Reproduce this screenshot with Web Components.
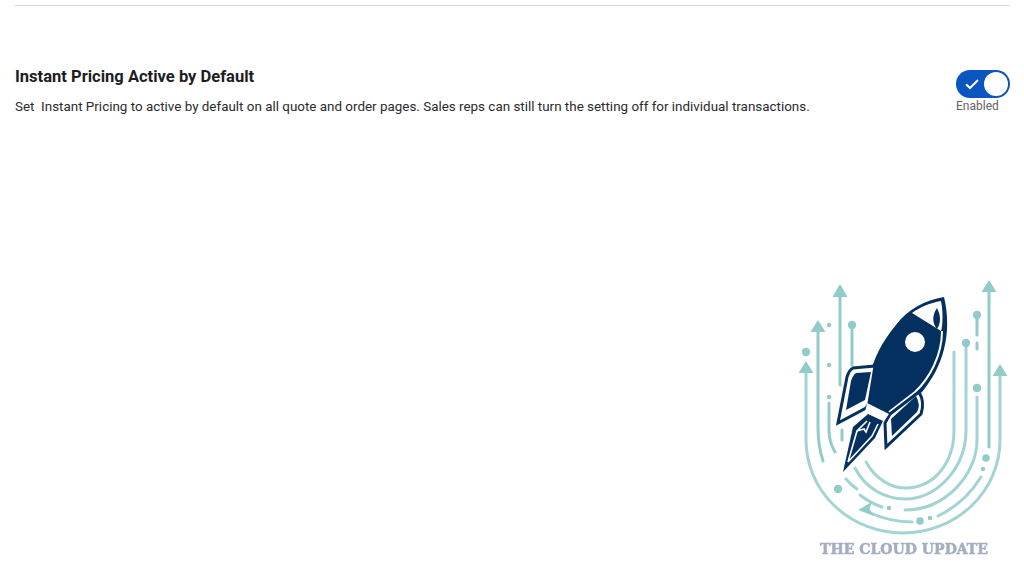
<!DOCTYPE html>
<html>
<head>
<meta charset="utf-8">
<title>Instant Pricing</title>
<style>
  html, body { margin: 0; padding: 0; background: #fff; }
  body { width: 1024px; height: 572px; overflow: hidden; font-family: Roboto, "Liberation Sans", sans-serif; }
</style>
</head>
<body>
<settings-page>
  <setting-row label="Instant Pricing Active by Default">
    Set&nbsp; Instant Pricing to active by default on all quote and order pages. Sales reps can still turn the setting off for individual transactions.
    <toggle-switch slot="control" label="Enabled"></toggle-switch>
  </setting-row>
</settings-page>
<cloud-logo>THE CLOUD UPDATE</cloud-logo>

<script>
class SettingsPage extends HTMLElement {
  constructor() {
    super();
    this.attachShadow({ mode: "open" }).innerHTML = `
      <style>
        :host { display: block; padding: 5px 14px 0 15px; }
        .rule { height: 1px; background: #d6d6d6; }
        .content { padding-top: 61px; }
      </style>
      <div class="rule"></div>
      <div class="content"><slot></slot></div>`;
  }
}

class SettingRow extends HTMLElement {
  constructor() {
    super();
    this.attachShadow({ mode: "open" }).innerHTML = `
      <style>
        :host { display: flex; justify-content: space-between; align-items: flex-start; }
        .title { font-size: 16.55px; line-height: 20px; font-weight: 700; color: #1d1d1f; }
        .text { margin-top: 10px; font-size: 13.41px; line-height: 20px; color: #2b2b2e; }
        .control { padding-top: 3px; }
      </style>
      <div>
        <div class="title"></div>
        <div class="text"><slot></slot></div>
      </div>
      <div class="control"><slot name="control"></slot></div>`;
  }

  connectedCallback() {
    this.shadowRoot.querySelector(".title").textContent = this.getAttribute("label");
  }
}

class ToggleSwitch extends HTMLElement {
  constructor() {
    super();
    this.attachShadow({ mode: "open" }).innerHTML = `
      <style>
        :host { display: flex; flex-direction: column; width: 54px; }
        .track { display: flex; align-items: center; justify-content: space-between; box-sizing: border-box;
          width: 54px; height: 28px; padding: 0 2px 0 8px; border-radius: 14px; background: #0b55c0; }
        .knob { width: 24px; height: 24px; border-radius: 50%; background: #fff; }
        svg { display: block; }
        .label { margin-top: 1px; font-size: 12px; line-height: 14px; color: #636363; }
      </style>
      <div class="track">
        <svg width="16" height="12" viewBox="0 0 16 12"><path d="M2 6.2l4 3.8 8-8" fill="none" stroke="#fff" stroke-width="2"/></svg>
        <div class="knob"></div>
      </div>
      <div class="label"></div>`;
  }

  connectedCallback() {
    this.shadowRoot.querySelector(".label").textContent = this.getAttribute("label");
  }
}

class CloudLogo extends HTMLElement {
  constructor() {
    super();
    this.attachShadow({ mode: "open" }).innerHTML = `
      <style>
        :host { display: block; position: absolute; left: 780px; top: 270px; width: 244px; }
        svg { display: block; filter: blur(.3px); }
        .name { margin-top: -21px; padding-left: 4px; text-align: center; font: 700 15.6px/20px "DejaVu Serif Condensed", "DejaVu Serif", serif;
          color: #a3aec0; white-space: nowrap; -webkit-text-stroke: .5px #a3aec0; filter: blur(.4px); }
      </style>
      <svg width="244" height="290" viewBox="780 270 244 290">
        <g fill="none" stroke="#91cbca" stroke-width="3" stroke-linecap="round">
          <path d="M840 295V385"/>
          <path d="M818 330V428Q818 445 823 461"/>
          <path d="M806 371V440A97 93 0 0 0 1000 440V374" stroke="#a2d4d3"/>
          <path d="M989 290V447"/>
          <path d="M829 403V430Q829 442 835 452"/>
          <path d="M852 330V365"/>
          <path d="M842 430V440"/>
          <path d="M977 318V335M977 343V349"/>
          <path d="M966 347V430C966 470 935 499 905 499C885 499 865 488 855 468" stroke="#a2d4d3"/>
          <path d="M954 352V430C954 462 935 488 905 488C890 488 875 478 866 462" stroke="#a2d4d3"/>
          <path d="M977 397V440C977 475 945 510 905 510" stroke="#a2d4d3"/>
          <path d="M882 507Q870 503 860 495M857 489Q851 485 846 479" stroke="#a2d4d3"/>
          <path d="M981 477Q965 503 938 516M912 522Q890 522 868 512" stroke="#a2d4d3"/>
        </g>
        <g fill="#91cbca">
          <path d="M840 284l7.5 13h-15zM818 320l7.5 12h-15zM806 361l7.5 12h-15zM989 280l7.5 12h-15zM1000 364l7.5 12h-15z"/>
          <path d="M858 510l14-8-2.500 7 4.500 7z"/>
          <circle cx="806" cy="352" r="4.200"/><circle cx="852" cy="325" r="4.200"/>
          <circle cx="829" cy="325" r="2.200"/><circle cx="829" cy="365" r="2.200"/><circle cx="829" cy="397" r="2.200"/>
          <circle cx="977" cy="315" r="4.200"/><circle cx="966" cy="343" r="4.200"/><circle cx="977" cy="388" r="4.200"/>
          <circle cx="986" cy="458" r="3.800"/><circle cx="983" cy="469" r="2.200"/>
          <circle cx="838" cy="489" r="4.200"/><circle cx="889" cy="508" r="2.200"/>
          <circle cx="920" cy="521" r="3.800"/><circle cx="930" cy="518" r="2.200"/>
        </g>
        <!-- rocket -->
        <path d="M944 297C925 300 908 309 896 325C882 342 873 358 869 380L866 404L889 416L922 392C942 368 953 335 944 297Z" fill="#03305f"/>
        <path d="M912 313L941 331C943 325 943 310 941 301C930 303 920 307 912 313Z" fill="#fff"/>
        <path d="M942 331C942 355 930 378 915 392L889 412" fill="none" stroke="#fff" stroke-width="2"/>
        <path d="M937 308C941 316 941 323 937 329C932 323 932 315 937 308Z" fill="#03305f"/>
        <circle cx="915" cy="342" r="10" fill="#fff"/>
        <path d="M875 366L853 368Q849 370 847 377L838 423L866 408L869 403Z" fill="#fff" stroke="#03305f" stroke-width="3"/>
        <path d="M871 372L856 373Q853 375 851 381L846 410L865 400Z" fill="#03305f"/>
        <path d="M919 392Q925 402 921 414L886 447L885 423L890 414Z" fill="#fff" stroke="#03305f" stroke-width="3"/>
        <path d="M916 396Q921 405 917 412L892 436L891 419Z" fill="#03305f"/>
        <path d="M867 403L889 414L884 421L865 412Z" fill="#fff"/>
        <path d="M843 472L853 427L868 414L883 421L875 438Z" fill="#03305f"/>
        <path d="M848 462L857 431L867 421M857 431L864 429L866 432L870 422M848 462L872 436L878 424" fill="none" stroke="#fff" stroke-width="1.6"/>
      </svg>
      <div class="name"><slot></slot></div>`;
  }
}

customElements.define("settings-page", SettingsPage);
customElements.define("setting-row", SettingRow);
customElements.define("toggle-switch", ToggleSwitch);
customElements.define("cloud-logo", CloudLogo);
</script>
</body>
</html>
